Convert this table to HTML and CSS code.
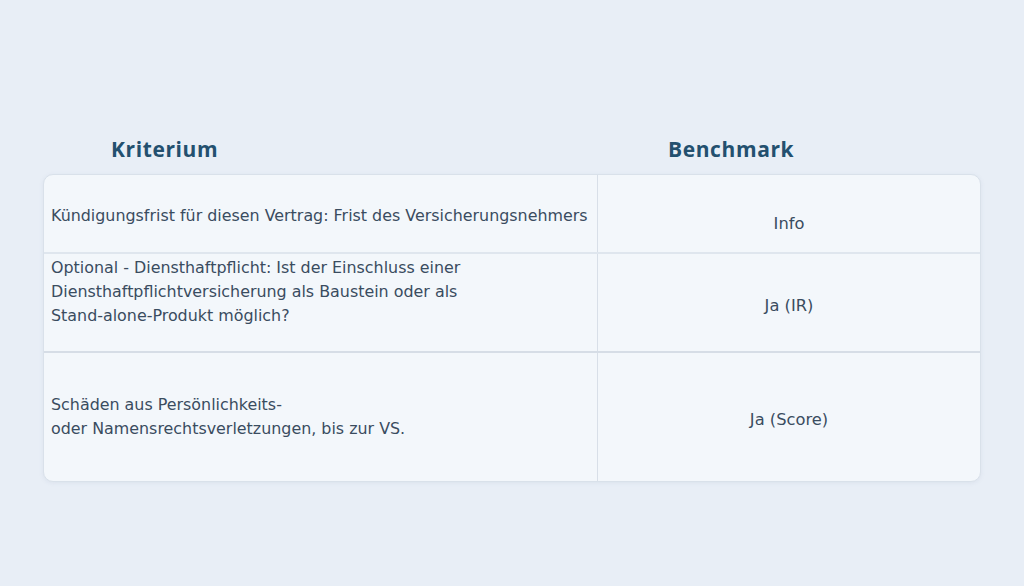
FILE: index.html
```html
<!DOCTYPE html>
<html lang="de">
<head>
<meta charset="utf-8">
<title>Kriterium Benchmark</title>
<link rel="stylesheet" href="styles.css">
</head>
<body>
<div class="page">
  <div class="head">
    <div class="head-cell head-left">Kriterium</div>
    <div class="head-cell head-right">Benchmark</div>
  </div>
  <div class="card">
    <div class="row row1">
      <div class="cell left">Kündigungsfrist für diesen Vertrag: Frist des Versicherungsnehmers</div>
      <div class="cell right">Info</div>
    </div>
    <div class="row row2">
      <div class="cell left">Optional - Diensthaftpflicht: Ist der Einschluss einer<br>Diensthaftpflichtversicherung als Baustein oder als<br>Stand-alone-Produkt möglich?</div>
      <div class="cell right">Ja (IR)</div>
    </div>
    <div class="row row3">
      <div class="cell left">Schäden aus Persönlichkeits-<br>oder Namensrechtsverletzungen, bis zur VS.</div>
      <div class="cell right">Ja (Score)</div>
    </div>
  </div>
</div>
</body>
</html>
```

FILE: styles.css
```css
html, body {
  margin: 0;
  padding: 0;
}
body {
  background: #e8eef6;
  font-family: "DejaVu Sans", "Open Sans", sans-serif;
  color: #3a4c5f;
  width: 1024px;
  height: 586px;
  overflow: hidden;
}
.page {
  padding: 130px 43px 0 43px;
}
.head {
  display: grid;
  grid-template-columns: 555px 1fr;
  height: 44px;
  align-items: start;
}
.head-cell {
  padding-top: 5px;
  line-height: 28px;
  font-family: "Open Sans", "DejaVu Sans", sans-serif;
  font-size: 21px;
  font-weight: 700;
  letter-spacing: 0.6px;
  color: #23506f;
}
.head-left {
  padding-left: 68px;
}
.head-right {
  padding-left: 70px;
}
.card {
  background: #f3f7fb;
  border: 1px solid #d9e1ea;
  border-radius: 10px;
  box-shadow: 0 1px 4px rgba(120, 140, 170, 0.12);
  overflow: hidden;
}
.row {
  display: grid;
  grid-template-columns: 554px 1fr;
  border-bottom: 2px solid #dfe6ee;
}
.row:last-child {
  border-bottom: none;
}
.row1 { height: 77px; }
.row2 { height: 97px; border-bottom-color: #d6dde6; }
.row3 { height: 128px; }
.cell {
  font-size: 15.9px;
  line-height: 24px;
  display: flex;
  align-items: center;
}
.left {
  padding-left: 7px;
  border-right: 1px solid #d8dfe8;
}
.right {
  justify-content: center;
  font-size: 16.3px;
}
.row1 .left { padding-top: 5px; }
.row1 .right { padding-top: 20px; }
.row2 .left { align-items: flex-start; padding-top: 2px; }
.row2 .right { padding-top: 7px; }
.row3 .right { padding-top: 5px; }
```
